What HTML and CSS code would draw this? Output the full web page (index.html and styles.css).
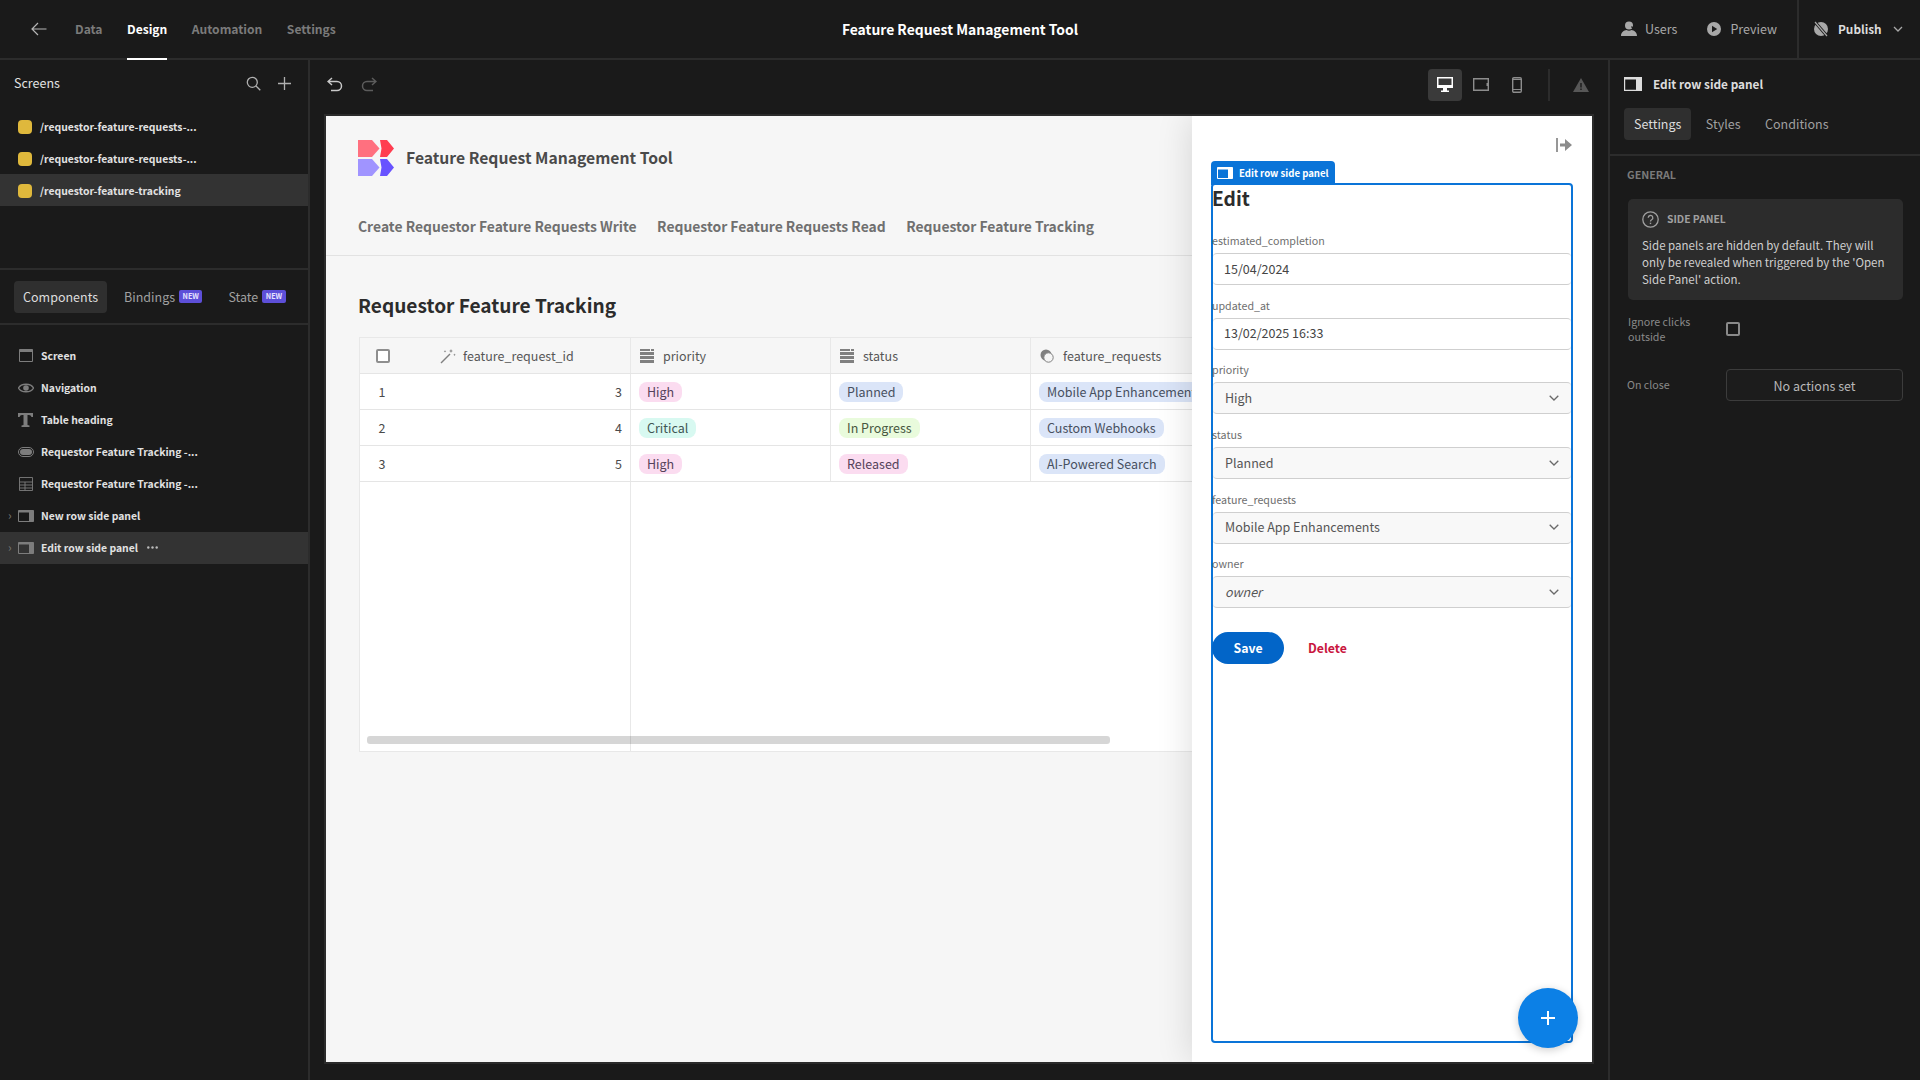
FILE: index.html
```html
<!DOCTYPE html>
<html lang="en">
<head>
    <meta charset="UTF-8">
    <title>Feature Request Management Tool</title>
    <link rel="stylesheet" href="styles.css">
</head>
<body>

<div class="app">
    <header class="topbar">
        <div class="topbar-left">
            <svg class="back" viewBox="0 0 16 14" width="16" height="14"><path d="M15.500 7H1M7 1L1 7l6 6" fill="none" stroke="currentColor" stroke-width="1.200"/></svg>
            <nav class="tabs">
                <a>Data</a>
                <a class="active">Design</a>
                <a>Automation</a>
                <a>Settings</a>
            </nav>
        </div>
        <div class="app-title">Feature Request Management Tool</div>
        <div class="topbar-right">
            <span class="top-action users">
                <svg viewBox="0 0 16 16" width="16" height="16"><circle cx="8" cy="4.500" r="4" fill="currentColor"/><path d="M0 15c0-4 3-5.500 5.500-6 1.500 1 3.500 1 5 0 2.500.5 5.500 2 5.500 6z" fill="currentColor"/><path d="M10.500 5.500l2.500 3" stroke="#1a1a1a" stroke-width="1.200"/></svg>
                Users
            </span>
            <span class="top-action preview-link">
                <svg viewBox="0 0 14 14" width="14" height="14"><circle cx="7" cy="7" r="7" fill="currentColor"/><path d="M5 3.800v6.400L10.200 7z" fill="#1a1a1a"/></svg>
                Preview
            </span>
            <span class="publish">
                <svg viewBox="0 0 16 16" width="16" height="16"><circle cx="8" cy="8" r="7" fill="currentColor"/><path d="M2 1l12 14" stroke="#1a1a1a" stroke-width="3"/><path d="M2 1l12 14" stroke="currentColor" stroke-width="1.200"/></svg>
                <b>Publish</b>
                <svg class="chev" viewBox="0 0 10 6" width="10" height="6"><path d="M1 1l4 4 4-4" fill="none" stroke="currentColor" stroke-width="1.300"/></svg>
            </span>
        </div>
    </header>

    <aside class="sidebar">
        <div class="screens-panel">
            <div class="screens-head">
                <span>Screens</span>
                <div class="head-icons">
                    <svg viewBox="0 0 15 15" width="15" height="15"><circle cx="6.300" cy="6.300" r="5" fill="none" stroke="currentColor" stroke-width="1.300"/><path d="M10 10l4.300 4.300" stroke="currentColor" stroke-width="1.300"/></svg>
                    <svg viewBox="0 0 13 13" width="13" height="13"><path d="M6.500 0v13M0 6.500h13" stroke="currentColor" stroke-width="1.300"/></svg>
                </div>
            </div>
            <ul class="screen-list">
                <li><i class="dot"></i>/requestor-feature-requests-...</li>
                <li><i class="dot"></i>/requestor-feature-requests-...</li>
                <li class="selected"><i class="dot"></i>/requestor-feature-tracking</li>
            </ul>
        </div>
        <div class="comp-tabs">
            <span class="pill-tab">Components</span>
            <span class="comp-tab">Bindings <em>NEW</em></span>
            <span class="comp-tab">State <em>NEW</em></span>
        </div>
        <ul class="tree">
            <li>
                <svg viewBox="0 0 16 14" width="16" height="14"><path d="M1.500.500h13v12h-13z" fill="none" stroke="currentColor"/><path d="M1.500.500h13v2.500h-13z" fill="currentColor"/></svg>
                Screen
            </li>
            <li>
                <svg viewBox="0 0 16 12" width="16" height="12"><path d="M.5 6C3 1 13 1 15.500 6 13 11 3 11 .5 6z" fill="none" stroke="currentColor" stroke-width="1.300"/><circle cx="8" cy="6" r="2.800" fill="currentColor"/></svg>
                Navigation
            </li>
            <li>
                <svg viewBox="0 0 16 14" width="16" height="14"><path d="M0 0h15v4h-1.500q-.5-2-2.500-2H9.500v10l2 .5V14h-8v-1.500l2-.5V2H4Q2 2 1.500 4H0z" fill="currentColor"/></svg>
                Table heading
            </li>
            <li>
                <svg viewBox="0 0 16 10" width="16" height="10"><rect x=".5" y=".5" width="15" height="9" rx="4.500" fill="none" stroke="currentColor"/><rect x="2" y="2" width="12" height="6" rx="3" fill="currentColor"/></svg>
                Requestor Feature Tracking -...
            </li>
            <li>
                <svg viewBox="0 0 14 14" width="14" height="14"><path d="M.5.500h13v13H.5zM.5 5h13M.5 8h13M.5 11h13M6 5v8.500" fill="none" stroke="currentColor" stroke-width=".9"/></svg>
                Requestor Feature Tracking -...
            </li>
            <li class="expandable">
                <span class="caret">&#8250;</span>
                <svg viewBox="0 0 16 12" width="16" height="12"><path d="M.5.500h15v11H.5z" fill="none" stroke="currentColor"/><path d="M.5.500h15v2H.5zM11 .5h4.500v11H11z" fill="currentColor"/></svg>
                New row side panel
            </li>
            <li class="expandable selected">
                <span class="caret">&#8250;</span>
                <svg viewBox="0 0 16 12" width="16" height="12"><path d="M.5.500h15v11H.5z" fill="none" stroke="currentColor"/><path d="M.5.500h15v2H.5zM11 .5h4.500v11H11z" fill="currentColor"/></svg>
                Edit row side panel
                <svg class="more" viewBox="0 0 11 3" width="11" height="3"><circle cx="1.300" cy="1.500" r="1.200"/><circle cx="5.500" cy="1.500" r="1.200"/><circle cx="9.700" cy="1.500" r="1.200"/></svg>
            </li>
        </ul>
    </aside>

    <main class="workspace">
        <div class="toolbar">
            <div class="undo-redo">
                <svg viewBox="0 0 16 15" width="16" height="15"><path d="M5 1L1 4.500 5 8M1.500 4.500H10a4.500 4.500 0 0 1 0 9H4" fill="none" stroke="currentColor" stroke-width="1.500"/></svg>
                <svg class="off" viewBox="0 0 16 15" width="16" height="15"><path d="M11 1l4 3.500L11 8M14.500 4.500H6a4.500 4.500 0 0 0 0 9h6" fill="none" stroke="currentColor" stroke-width="1.500"/></svg>
            </div>
            <div class="devices">
                <span class="device on"><svg viewBox="0 0 16 15" width="16" height="15"><path d="M0 0h16v11H0z" fill="currentColor"/><path d="M6 11h4v2.500h2V15H4v-1.500h2z" fill="currentColor"/><path d="M1.500 1.500h13v6.500h-13z" fill="#3a3a3a"/></svg></span>
                <span class="device"><svg viewBox="0 0 16 13" width="16" height="13"><path d="M.7.700h14.600v11.600H.7z" fill="none" stroke="currentColor" stroke-width="1.400"/><path d="M13.500 5h2v3h-2z" fill="currentColor"/></svg></span>
                <span class="device"><svg viewBox="0 0 10 16" width="10" height="16"><rect x=".7" y=".7" width="8.600" height="14.600" rx="1.200" fill="none" stroke="currentColor" stroke-width="1.400"/><path d="M1 12.500h8M1 2.500h8" stroke="currentColor"/></svg></span>
                <i class="device-sep"></i>
                <svg class="warn" viewBox="0 0 16 14" width="16" height="14"><path d="M8 0l8 14H0z" fill="currentColor"/><path d="M7.300 5h1.400v4.500H7.300zM7.300 10.500h1.400V12H7.300z" fill="#1a1a1a"/></svg>
            </div>
        </div>

        <div class="preview">
            <div class="site-header">
                <div class="brand">
                    <svg viewBox="0 0 36 36" width="36" height="36">
                        <path d="M0 0h14l7.500 8.500L14 17H0z" fill="#ff707f"/>
                        <path d="M22 0h7l7 8.500L29 17h-7l1.500-8.500z" fill="#ff3d50"/>
                        <path d="M0 19h14l7.500 8.500L14 36H0z" fill="#a094ff"/>
                        <path d="M22 19h7l7 8.500L29 36h-7l1.500-8.500z" fill="#6853ff"/>
                    </svg>
                    <span>Feature Request Management Tool</span>
                </div>
                <nav class="site-nav">
                    <a>Create Requestor Feature Requests Write</a>
                    <a>Requestor Feature Requests Read</a>
                    <a>Requestor Feature Tracking</a>
                </nav>
            </div>

            <div class="site-body">
                <h2>Requestor Feature Tracking</h2>
                <div class="table">
                    <div class="table-row table-head">
                        <div class="cell first">
                            <i class="check"></i>
                            <span class="id-head">
                                <svg viewBox="0 0 16 16" width="16" height="16"><path d="M1 15L10 6" stroke="currentColor" stroke-width="1.500"/><path d="M11 1l.6 1.400L13 3l-1.400.6L11 5l-.6-1.400L9 3l1.400-.6zM14.500 5.500l.4.900.9.400-.9.400-.4.900-.4-.9-.9-.4.9-.4zM5 2l.4.900.9.400-.9.400L5 4.600l-.4-.9-.9-.4.9-.4z" fill="currentColor"/></svg>
                                feature_request_id
                            </span>
                        </div>
                        <div class="cell">
                            <svg class="col-icon" viewBox="0 0 14 14" width="14" height="14"><path d="M0 0h10v2H0zM11 0h3v2h-3zM0 3h14v3H0zM0 7h14v3H0zM0 11h14v3H0z" fill="currentColor"/></svg>
                            priority
                        </div>
                        <div class="cell">
                            <svg class="col-icon" viewBox="0 0 14 14" width="14" height="14"><path d="M0 0h10v2H0zM11 0h3v2h-3zM0 3h14v3H0zM0 7h14v3H0zM0 11h14v3H0z" fill="currentColor"/></svg>
                            status
                        </div>
                        <div class="cell">
                            <svg class="col-icon" viewBox="0 0 14 14" width="14" height="14"><circle cx="6" cy="6" r="5.500" fill="currentColor"/><circle cx="8.500" cy="8.500" r="4.700" fill="#f5f5f5" stroke="currentColor"/></svg>
                            feature_requests
                        </div>
                    </div>
                    <div class="table-row">
                        <div class="cell first"><span class="row-no">1</span><span class="num">3</span></div>
                        <div class="cell"><span class="tag pink">High</span></div>
                        <div class="cell"><span class="tag blue">Planned</span></div>
                        <div class="cell"><span class="tag blue">Mobile App Enhancements</span></div>
                    </div>
                    <div class="table-row">
                        <div class="cell first"><span class="row-no">2</span><span class="num">4</span></div>
                        <div class="cell"><span class="tag teal">Critical</span></div>
                        <div class="cell"><span class="tag green">In Progress</span></div>
                        <div class="cell"><span class="tag blue">Custom Webhooks</span></div>
                    </div>
                    <div class="table-row">
                        <div class="cell first"><span class="row-no">3</span><span class="num">5</span></div>
                        <div class="cell"><span class="tag pink">High</span></div>
                        <div class="cell"><span class="tag pink">Released</span></div>
                        <div class="cell"><span class="tag blue">AI-Powered Search</span></div>
                    </div>
                    <div class="table-empty">
                        <div class="scrollbar"></div>
                    </div>
                </div>
            </div>

            <div class="side-panel">
                <svg class="close" viewBox="0 0 16 14" width="16" height="14"><path d="M1 0v14" stroke="currentColor" stroke-width="1.800"/><path d="M4 5.500h5V1l7 6-7 6V8.500H4z" fill="currentColor"/></svg>
                <div class="frame">
                    <div class="frame-tab">
                        <svg viewBox="0 0 16 12" width="16" height="12"><path d="M.5.500h15v11H.5z" fill="none" stroke="currentColor"/><path d="M.5.500h15v2H.5zM11 .5h4.500v11H11z" fill="currentColor"/></svg>
                        Edit row side panel
                    </div>
                    <h3>Edit</h3>
                    <div class="fields">
                        <div class="field">
                            <label>estimated_completion</label>
                            <div class="control">15/04/2024</div>
                        </div>
                        <div class="field">
                            <label>updated_at</label>
                            <div class="control">13/02/2025 16:33</div>
                        </div>
                        <div class="field">
                            <label>priority</label>
                            <div class="control select">High<svg viewBox="0 0 10 6" width="10" height="6"><path d="M.7.700L5 5l4.300-4.300" fill="none" stroke="currentColor" stroke-width="1.300"/></svg></div>
                        </div>
                        <div class="field">
                            <label>status</label>
                            <div class="control select">Planned<svg viewBox="0 0 10 6" width="10" height="6"><path d="M.7.700L5 5l4.300-4.300" fill="none" stroke="currentColor" stroke-width="1.300"/></svg></div>
                        </div>
                        <div class="field">
                            <label>feature_requests</label>
                            <div class="control select">Mobile App Enhancements<svg viewBox="0 0 10 6" width="10" height="6"><path d="M.7.700L5 5l4.300-4.300" fill="none" stroke="currentColor" stroke-width="1.300"/></svg></div>
                        </div>
                        <div class="field">
                            <label>owner</label>
                            <div class="control select placeholder"><span>owner</span><svg viewBox="0 0 10 6" width="10" height="6"><path d="M.7.700L5 5l4.300-4.300" fill="none" stroke="currentColor" stroke-width="1.300"/></svg></div>
                        </div>
                    </div>
                    <div class="form-actions">
                        <button class="save">Save</button>
                        <button class="delete">Delete</button>
                    </div>
                </div>
                <div class="fab">
                    <svg viewBox="0 0 14 14" width="14" height="14"><path d="M7 0v14M0 7h14" stroke="currentColor" stroke-width="2"/></svg>
                </div>
            </div>
        </div>
    </main>

    <aside class="settings">
        <div class="settings-top">
            <div class="settings-title">
                <svg viewBox="0 0 18 14" width="18" height="14"><path d="M.6.600h16.800v12.800H.6z" fill="none" stroke="currentColor" stroke-width="1.200"/><path d="M.6.600h16.800v2H.6zM12 .6h5.400v12.800H12z" fill="currentColor"/></svg>
                Edit row side panel
            </div>
            <div class="settings-tabs">
                <span class="pill-tab">Settings</span>
                <span class="comp-tab">Styles</span>
                <span class="comp-tab">Conditions</span>
            </div>
        </div>
        <div class="settings-body">
            <div class="section-title">GENERAL</div>
            <div class="info-box">
                <div class="info-head">
                    <svg viewBox="0 0 17 17" width="17" height="17"><circle cx="8.500" cy="8.500" r="7.700" fill="none" stroke="currentColor" stroke-width="1.300"/><path d="M6.200 6.800a2.300 2.300 0 1 1 3.400 2c-.8.500-1.100.8-1.100 1.700" fill="none" stroke="currentColor" stroke-width="1.300"/><path d="M7.800 11.700h1.400v1.400H7.800z" fill="currentColor"/></svg>
                    SIDE PANEL
                </div>
                <p>Side panels are hidden by default. They will only be revealed when triggered by the 'Open Side Panel' action.</p>
            </div>
            <div class="prop-row ignore">
                <span>Ignore clicks<br>outside</span>
                <i class="check dark"></i>
            </div>
            <div class="prop-row onclose">
                <span>On close</span>
                <div class="actions-btn">No actions set</div>
            </div>
        </div>
    </aside>
</div>

</body>
</html>
```

FILE: styles.css
```css
:root {
    --bg: #1a1a1a;
    --line: #2c2c2c;
    --hover: #333;
    --dim: #7b7b7b;
    --text: #e2e2e2;
    --blue: #0a74d8;
}
* {
    box-sizing: border-box;
}
html, body {
    margin: 0;
    height: 100%;
}
body {
    font-family: "Noto Sans CJK SC", "Noto Sans", sans-serif;
    background: var(--bg);
    color: var(--text);
    font-size: 12.500px;
    line-height: 18px;
    overflow: hidden;
}
ul {
    list-style: none;
    margin: 0;
    padding: 0;
}
svg {
    display: block;
    flex: none;
}

.app {
    display: grid;
    grid-template-columns: 310px 1fr 312px;
    grid-template-rows: 60px 1fr;
    width: 1920px;
    height: 1080px;
}

/* top bar */
.topbar {
    grid-column: 1 / 4;
    display: grid;
    grid-template-columns: 1fr auto 1fr;
    align-items: center;
    height: 60px;
    border-bottom: 2px solid var(--line);
}
.topbar-left {
    display: flex;
    align-items: center;
    padding-left: 31px;
    height: 58px;
}
.back {
    color: #b5b5b5;
}
.tabs {
    display: flex;
    gap: 24.500px;
    margin-left: 28px;
    height: 58px;
}
.tabs a {
    display: flex;
    align-items: center;
    font-size: 12.100px;
    font-weight: 600;
    color: var(--dim);
    border-bottom: 2px solid transparent;
    height: 60px;
}
.tabs a.active {
    color: #fff;
    border-bottom-color: #fff;
}
.app-title {
    font-size: 13.900px;
    font-weight: 600;
    color: #fff;
}
.topbar-right {
    display: flex;
    justify-content: flex-end;
    align-items: center;
    height: 58px;
    color: #a8a8a8;
}
.top-action {
    display: flex;
    align-items: center;
    gap: 8px;
}
.users {
    margin-right: 30px;
}
.preview-link {
    gap: 9px;
    margin-right: 20px;
}
.publish {
    display: flex;
    align-items: center;
    height: 58px;
    width: 123px;
    padding-left: 14px;
    border-left: 2px solid var(--line);
}
.publish b {
    font-size: 11.800px;
    font-weight: 600;
    color: #ddd;
    margin-left: 9px;
}
.publish .chev {
    margin-left: 11px;
}

/* left sidebar */
.sidebar {
    border-right: 2px solid var(--line);
    display: flex;
    flex-direction: column;
}
.screens-panel {
    height: 210px;
    border-bottom: 2px solid var(--line);
}
.screens-head {
    display: flex;
    justify-content: space-between;
    align-items: center;
    height: 46px;
    padding: 0 17px 0 14px;
}
.head-icons {
    display: flex;
    align-items: center;
    gap: 17px;
    color: #b0b0b0;
}
.screen-list {
    margin-top: 4px;
}
.screen-list li,
.tree li {
    display: flex;
    align-items: center;
    height: 32px;
    font-size: 10.400px;
    font-weight: 600;
}
.screen-list li {
    padding: 1px 0 0 18px;
    gap: 8px;
}
.selected {
    background: var(--hover);
}
.dot {
    width: 14px;
    height: 14px;
    border-radius: 4px;
    background: #dfb83c;
}
.comp-tabs {
    display: flex;
    align-items: center;
    height: 55px;
    padding: 0 14px 0;
    border-bottom: 2px solid var(--line);
}
.pill-tab {
    display: flex;
    align-items: center;
    height: 32px;
    padding: 0 9px;
    border-radius: 4px;
    background: #2f2f2f;
    color: #ddd;
}
.comp-tab {
    color: #a0a0a0;
    display: flex;
    align-items: center;
    gap: 4px;
}
.comp-tabs .comp-tab {
    margin-left: 17px;
}
.comp-tabs .comp-tab + .comp-tab {
    margin-left: 26px;
}
.comp-tab em {
    font-style: normal;
    font-size: 7.200px;
    font-weight: 700;
    line-height: 13px;
    padding: 0 3.500px;
    border-radius: 2px;
    background: #5d4fd8;
    color: #e6e3ff;
}
.tree {
    margin-top: 15px;
}
.tree li {
    position: relative;
    padding-left: 18px;
}
.tree li svg {
    color: #7d7d7d;
    width: 16px;
    margin-right: 7px;
}
.caret {
    position: absolute;
    left: 8px;
    top: 6px;
    font-size: 12px;
    font-weight: 400;
    color: #777;
}
.tree li svg.more {
    width: 11px;
    margin: 0 0 2px 9px;
    fill: #bbb;
}

/* canvas */
.workspace {
    display: flex;
    flex-direction: column;
    padding: 0 16px 18px;
    min-width: 0;
}
.toolbar {
    display: flex;
    justify-content: space-between;
    align-items: center;
    height: 56px;
    padding-bottom: 7px;
}
.undo-redo {
    display: flex;
    gap: 18px;
    padding-left: 1px;
    color: #c8c8c8;
}
.undo-redo .off {
    color: #5c5c5c;
}
.devices {
    display: flex;
    align-items: center;
    color: #8d8d8d;
    padding-right: 3px;
}
.device {
    display: flex;
    justify-content: center;
    align-items: center;
    width: 34px;
    height: 32px;
    border-radius: 4px;
    margin-right: 2px;
}
.device.on {
    background: #3a3a3a;
    color: #fff;
}
.device-sep {
    width: 2px;
    height: 32px;
    background: var(--line);
    margin: 0 23px 0 12px;
}
.warn {
    color: #575757;
}

.preview {
    position: relative;
    flex: 1;
    overflow: hidden;
    background: #f6f6f6;
    color: #2c2c2c;
    outline: 2px solid #2b2b2b;
}
.site-header {
    height: 140px;
    padding: 24px 32px 0;
    border-bottom: 1px solid #e2e2e2;
}
.brand {
    display: flex;
    align-items: center;
    gap: 12px;
    font-size: 15.700px;
    font-weight: 600;
    color: #4a4a4a;
}
.site-nav {
    display: flex;
    gap: 20.500px;
    margin-top: 40px;
    font-size: 13.900px;
    font-weight: 600;
    line-height: 20px;
    color: #707070;
}
.site-body {
    padding: 34px 32px 0;
}
.site-body h2 {
    margin: 0 0 17px;
    font-size: 19.100px;
    font-weight: 600;
    line-height: 30px;
    color: #2c2c2c;
}

/* table */
.table {
    width: 1240px;
    margin-left: 1px;
    background: #fff;
    border: 1px solid #e8e8e8;
    color: #4a4a4a;
}
.table-row {
    display: grid;
    grid-template-columns: 271px 200px 200px 1fr;
    height: 36px;
    border-bottom: 1px solid #e5e5e5;
}
.table-head {
    background: #f6f6f6;
    color: #565656;
}
.cell {
    display: flex;
    align-items: center;
    padding-left: 8px;
    border-right: 1px solid #e8e8e8;
    white-space: nowrap;
}
.cell.first {
    padding-left: 0;
}
.col-icon {
    color: #808080;
    margin: 0 9px 0 1px;
}
.check {
    display: block;
    width: 14px;
    height: 14px;
    margin-left: 16px;
    border: 2px solid #8e8e8e;
    border-radius: 2px;
    background: #fff;
}
.id-head {
    display: flex;
    align-items: center;
    gap: 7px;
    margin-left: 50px;
}
.id-head svg {
    color: #808080;
}
.row-no {
    width: 44px;
    text-align: center;
}
.num {
    margin-left: auto;
    padding-right: 8px;
}
.tag {
    height: 20px;
    line-height: 20px;
    padding: 0 8px;
    border-radius: 8px;
}
.pink {
    background: #fbdcf0;
    color: #54425a;
}
.blue {
    background: #dbe5f8;
    color: #47505f;
}
.teal {
    background: #d8f9f1;
    color: #3f5553;
}
.green {
    background: #e9fbdc;
    color: #47573f;
}
.table-empty {
    position: relative;
    height: 269px;
    background: linear-gradient(#e8e8e8, #e8e8e8) 270px 0 / 1px 100% no-repeat;
}
.scrollbar {
    position: absolute;
    left: 7px;
    bottom: 7px;
    width: 743px;
    height: 8px;
    border-radius: 3px;
    background: rgba(0, 0, 0, 0.16);
}

/* side panel drawn over the page */
.side-panel {
    position: absolute;
    top: 0;
    right: 0;
    bottom: 0;
    width: 400px;
    background: #fff;
    box-shadow: 0 0 34px rgba(0, 0, 0, 0.14);
    display: flex;
    flex-direction: column;
    padding: 22px 19px 19px;
}
.close {
    align-self: flex-end;
    color: #8c8c8c;
    margin: 0 1px 0 0;
}
.frame {
    position: relative;
    flex: 1;
    margin-top: 31px;
    border: 2px solid var(--blue);
    border-radius: 4px;
}
.frame-tab {
    position: absolute;
    left: -2px;
    top: -24px;
    display: flex;
    align-items: center;
    gap: 6px;
    height: 24px;
    padding: 0 6px;
    border-radius: 4px 4px 0 0;
    background: var(--blue);
    color: #fff;
    font-size: 9.600px;
    font-weight: 600;
}
.frame h3 {
    margin: 0 0 0 -1px;
    font-size: 19.200px;
    font-weight: 600;
    line-height: 26px;
    color: #2c2c2c;
}
.fields {
    display: flex;
    flex-direction: column;
    gap: 12.700px;
    margin-top: 22px;
}
.field label {
    display: block;
    margin: 0 0 5px -1px;
    font-size: 10.700px;
    line-height: 15px;
    color: #6e6e6e;
}
.control {
    display: flex;
    align-items: center;
    height: 32px;
    padding: 0 11px 1px;
    border: 1px solid #cfcfcf;
    border-left: 0;
    border-right: 0;
    border-radius: 4px;
    color: #454545;
}
.select {
    justify-content: space-between;
    padding: 0 12px 1px 12px;
    background: #f8f8f8;
    color: #555;
}
.select svg {
    color: #6a6a6a;
}
.placeholder span {
    font-style: italic;
}
.form-actions {
    display: flex;
    align-items: center;
    gap: 24px;
    margin-top: 24px;
}
.form-actions button {
    font: inherit;
    font-size: 12.300px;
    font-weight: 700;
    border: 0;
    padding: 0 0 1px;
    background: none;
    cursor: pointer;
}
.save {
    width: 72px;
    height: 32px;
    border-radius: 16px;
    margin-left: -1px;
    color: #fff;
}
.form-actions .save {
    background: #0265c8;
}
.form-actions .delete {
    color: #c9163e;
}
.fab {
    position: absolute;
    right: 14px;
    bottom: 14px;
    display: flex;
    justify-content: center;
    align-items: center;
    width: 60px;
    height: 60px;
    border-radius: 50%;
    background: #0c80e6;
    color: #fff;
    box-shadow: 0 2px 8px rgba(0, 0, 0, 0.2);
}

/* right settings panel */
.settings {
    border-left: 2px solid var(--line);
}
.settings-top {
    height: 96px;
    padding: 0 14px;
    border-bottom: 2px solid var(--line);
}
.settings-title {
    display: flex;
    align-items: center;
    gap: 11px;
    height: 48px;
    font-size: 11.800px;
    font-weight: 600;
    color: #ddd;
}
.settings-tabs {
    display: flex;
    align-items: center;
    gap: 14.500px;
}
.settings-tabs .pill-tab {
    padding: 0 10px;
}
.settings-tabs .comp-tab + .comp-tab {
    margin-left: 10px;
}
.settings-body {
    padding: 10px 17px 0 18px;
}
.section-title {
    margin-left: -1px;
    font-size: 10.700px;
    font-weight: 600;
    color: #7a7a7a;
    line-height: 18px;
}
.info-box {
    margin-top: 15px;
    height: 101px;
    padding: 11px 14px 0;
    border-radius: 5px;
    background: #2c2c2c;
}
.info-head {
    display: flex;
    align-items: center;
    gap: 8px;
    font-size: 10.300px;
    font-weight: 600;
    color: #a0a0a0;
}
.info-box p {
    margin: 9px 0 0;
    font-size: 11.500px;
    line-height: 17px;
    color: #cfcfcf;
}
.prop-row {
    display: grid;
    grid-template-columns: 98px 1fr;
    align-items: center;
    font-size: 10.700px;
    line-height: 15px;
    color: #8a8a8a;
}
.ignore {
    margin-top: 14px;
}
.check.dark {
    margin: 0;
    background: transparent;
    border-color: #8a8a8a;
}
.onclose {
    margin-top: 25px;
}
.onclose span {
    margin: -1px 0 0 -1px;
}
.actions-btn {
    display: flex;
    justify-content: center;
    align-items: center;
    height: 32px;
    border: 1px solid #3c3c3c;
    border-radius: 4px;
    background: #1c1c1c;
    font-size: 12.500px;
    color: #b8b8b8;
}
```
